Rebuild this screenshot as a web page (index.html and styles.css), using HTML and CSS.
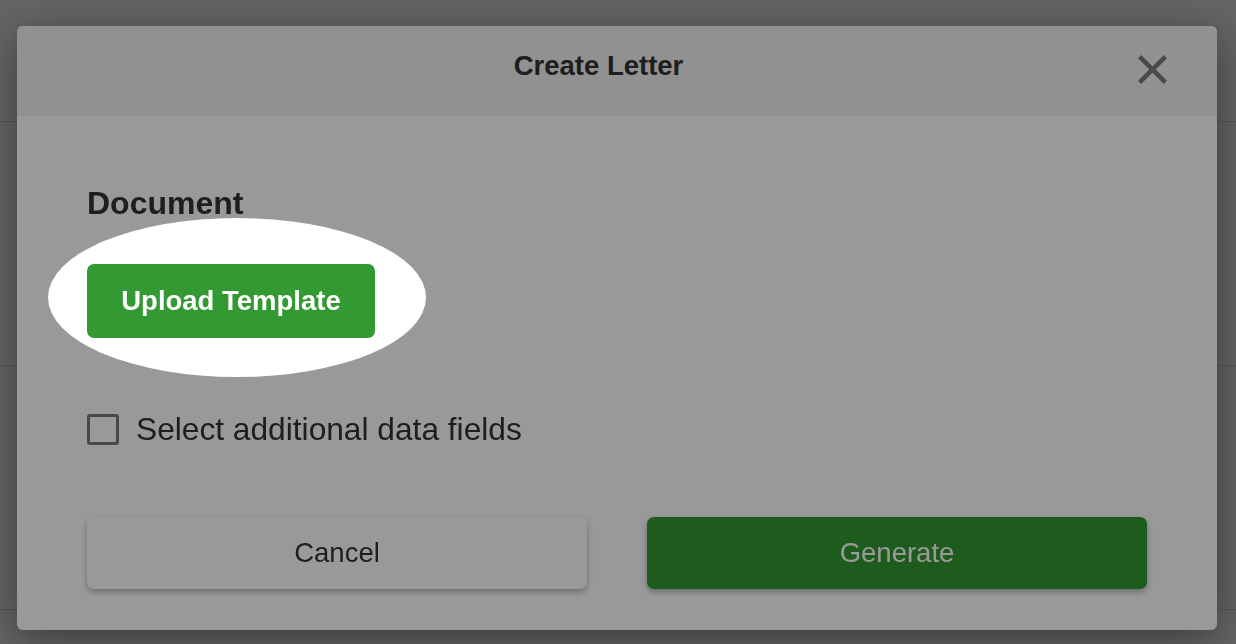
FILE: index.html
```html
<!DOCTYPE html>
<html lang="en">
<head>
  <meta charset="UTF-8" />
  <meta name="viewport" content="width=device-width, initial-scale=1" />
  <title>Create Letter</title>
  <link rel="stylesheet" href="styles.css">
</head>
<body>

  <!-- page behind the dialog -->
  <div class="page">
    <div class="page-bar"></div>
    <div class="page-row"></div>
    <div class="page-row"></div>
  </div>

  <div class="backdrop">
    <div class="modal">
      <div class="modal-header">
        <h2 class="modal-title">Create Letter</h2>
        <button class="close-btn" aria-label="Close">
          <svg width="29" height="29" viewBox="0 0 29 29">
            <line x1="1.6" y1="1.6" x2="27.4" y2="27.4" />
            <line x1="27.4" y1="1.6" x2="1.6" y2="27.4" />
          </svg>
        </button>
      </div>

      <div class="modal-body">
        <h3 class="section-label">Document</h3>

        <div class="upload-wrap">
          <button class="upload-btn">Upload Template</button>
          <!-- tour spotlight -->
          <div class="spotlight"></div>
        </div>

        <label class="check-row">
          <input type="checkbox" class="check" />
          <span>Select additional data fields</span>
        </label>

        <div class="actions">
          <button class="btn btn-cancel">Cancel</button>
          <button class="btn btn-generate">Generate</button>
        </div>
      </div>
    </div>
  </div>

</body>
</html>
```

FILE: styles.css
```css
body {
  margin: 0;
  font-family: 'Liberation Sans', Arial, sans-serif;
  background: #ffffff;
  color: #333;
  overflow: hidden;
}

.page-bar {
  height: 121px;
  border-bottom: 1px solid #dcdcdc;
}

.page-row {
  height: 243px;
  border-bottom: 1px solid #dcdcdc;
}

.backdrop {
  position: fixed;
  inset: 0;
  background: rgba(0, 0, 0, 0.35);
  padding: 26px 19px 0 17px;
}

.modal {
  width: 1200px;
  background: #ffffff;
  border-radius: 6px;
  box-shadow: 0 10px 40px rgba(0, 0, 0, 0.4);
}

.modal-header {
  height: 90px;
  display: flex;
  align-items: center;
  padding: 0 46px;
  background: #f2f2f2;
  border-radius: 6px 6px 0 0;
}

.modal-title {
  flex: 1;
  margin: 0 0 10px;
  text-align: center;
  font-size: 27.5px;
  line-height: 32px;
  font-weight: bold;
  color: #333;
}

.close-btn {
  width: 37px;
  height: 37px;
  margin-bottom: 3px;
  padding: 0;
  border: none;
  background: none;
  display: flex;
  align-items: center;
  justify-content: center;
  cursor: pointer;
}

.close-btn line {
  stroke: #7b7b7b;
  stroke-width: 4.5;
}

.modal-body {
  padding: 69px 70px 41px;
}

.section-label {
  margin: 0;
  font-size: 32px;
  line-height: 36px;
  font-weight: bold;
  color: #333;
}

.upload-wrap {
  position: relative;
  display: inline-block;
  margin-top: 43px;
  vertical-align: top;
}

.upload-btn {
  display: block;
  height: 74px;
  width: 288px;
  padding: 0;
  border: none;
  border-radius: 7px;
  background: #339933;
  color: #ffffff;
  font-family: 'Liberation Sans', Arial, sans-serif;
  font-size: 27.5px;
  font-weight: bold;
  cursor: pointer;
}

.spotlight {
  position: absolute;
  left: -39px;
  top: -46px;
  width: 378px;
  height: 159px;
  border-radius: 50%;
  box-shadow: 0 0 0 3000px rgba(0, 0, 0, 0.4);
  pointer-events: none;
  z-index: 10;
}

.check-row {
  display: flex;
  align-items: center;
  gap: 17px;
  margin-top: 73px;
  font-size: 31.7px;
  line-height: 37px;
  color: #333;
}

.check {
  appearance: none;
  width: 32px;
  height: 31px;
  margin: 0;
  border: 3px solid #7b7b7b;
  border-radius: 3px;
  background: #ffffff;
}

.actions {
  display: flex;
  gap: 60px;
  margin-top: 69px;
}

.btn {
  width: 500px;
  height: 72px;
  border: none;
  border-radius: 7px;
  font-family: 'Liberation Sans', Arial, sans-serif;
  font-size: 27.5px;
  box-shadow: 0 3px 6px rgba(0, 0, 0, 0.3);
  cursor: pointer;
}

.btn-cancel {
  background: #ffffff;
  color: #333;
}

.btn-generate {
  background: #339933;
  color: #ffffff;
}
```
